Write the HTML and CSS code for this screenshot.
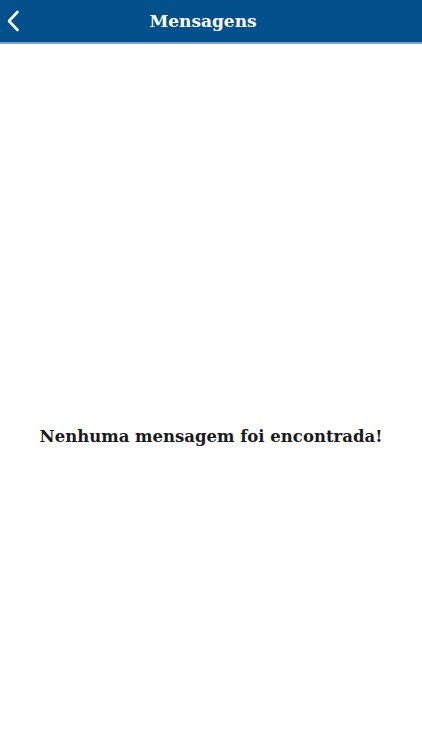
FILE: index.html
```html
<!DOCTYPE html>
<html lang="pt">
<head>
<meta charset="utf-8">
<link rel="stylesheet" href="styles.css">
</head>
<body>
<header class="topbar">
  <button class="back" aria-label="Voltar">
    <svg width="14" height="22" viewBox="0 0 14 22"><path d="M11.5 2 L3 11 L11.5 20" fill="none" stroke="#fff" stroke-width="2.6" stroke-linecap="round" stroke-linejoin="round"/></svg>
  </button>
  <h1 class="title">Mensagens</h1>
</header>
<main class="content">
  <p class="empty">Nenhuma mensagem foi encontrada!</p>
</main>
</body>
</html>
```
FILE: styles.css
```css
html, body {
  margin: 0;
  padding: 0;
  height: 100%;
  background: #fff;
}
body {
  font-family: "DejaVu Serif", "Liberation Serif", serif;
  display: flex;
  flex-direction: column;
}
.topbar {
  position: relative;
  height: 42px;
  background: #03508c;
  border-bottom: 2px solid #7fa3c4;
  display: flex;
  align-items: center;
  justify-content: center;
  flex: none;
}
.back {
  position: absolute;
  left: 6px;
  top: 9px;
  background: none;
  border: 0;
  padding: 0;
  width: 16px;
  height: 24px;
  display: flex;
  align-items: center;
}
.title {
  margin: 0;
  color: #fff;
  font-size: 17px;
  font-weight: bold;
  margin-left: -16px;
}
.content {
  flex: 1;
  display: flex;
  align-items: center;
  justify-content: center;
}
.empty {
  margin: 0;
  margin-top: 78px;
  font-size: 16.5px;
  font-weight: bold;
  color: #1a1a1a;
}
```
